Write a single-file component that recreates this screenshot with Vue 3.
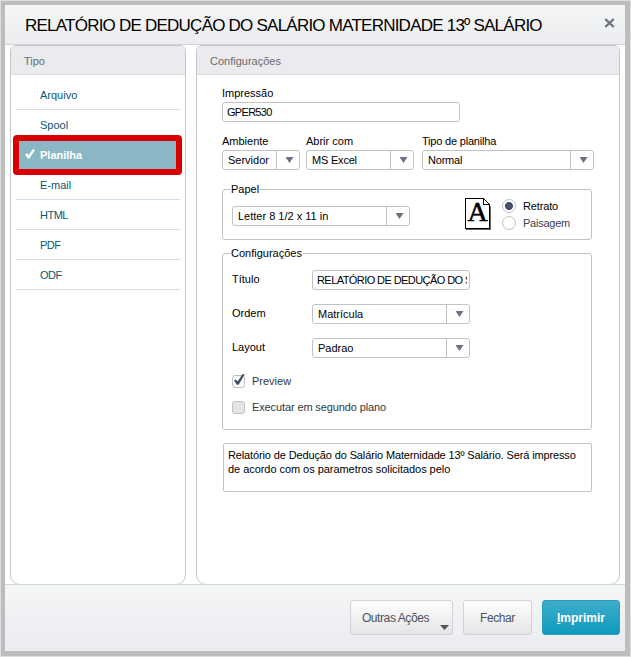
<template>
  <div class="frame">
    <div class="window">
      <header class="title-bar">
        <h1 class="w-title">RELATÓRIO DE DEDUÇÃO DO SALÁRIO MATERNIDADE 13º SALÁRIO</h1>
        <button class="close" aria-label="Close">
          <svg width="11" height="10" viewBox="0 0 11 10">
            <path d="M1.3 1 L9.7 9 M9.7 1 L1.3 9" stroke="#687180" stroke-width="2.3" />
          </svg>
        </button>
      </header>

      <main class="content">
        <section class="panel types">
          <h2 class="panel-head">Tipo</h2>
          <ul class="type-list">
            <li
              v-for="t in types"
              :key="t"
              class="type"
              :class="{ selected: t === type, short: t.length < 5 }"
              @click="type = t"
            >
              <svg v-if="t === type" class="check" width="10" height="10" viewBox="0 0 10 10">
                <path d="M0 5.6 L1.9 4.2 L3.6 6.1 L8 0 L10 1 L4.4 9.4 L2.8 9.4 Z" fill="#fff" />
              </svg>
              <span>{{ t }}</span>
            </li>
          </ul>
        </section>

        <section class="panel settings">
          <h2 class="panel-head">Configurações</h2>
          <div class="form">
            <label class="field">
              <span>Impressão</span>
              <input v-model="impressao" class="input report" />
            </label>

            <div class="row">
              <div v-for="s in selects" :key="s.label" class="field" :class="s.cls">
                <span>{{ s.label }}</span>
                <div class="select">
                  <span class="value">{{ s.value }}</span>
                  <i class="arrow"></i>
                </div>
              </div>
            </div>

            <fieldset class="group paper">
              <legend>Papel</legend>
              <div class="select paper-size">
                <span class="value">Letter 8 1/2 x 11 in</span>
                <i class="arrow"></i>
              </div>
              <svg class="page-icon" width="27" height="33" viewBox="0 0 27 33" shape-rendering="crispEdges">
                <path d="M1 31.5 H25.5 V8" fill="none" stroke="#666" />
                <path d="M0.5 0.5 H18.5 L24.5 6.5 V30.5 H0.5 Z" fill="#fff" stroke="#000" />
                <path d="M18.5 0.5 V6.5 H24.5" fill="none" stroke="#000" />
                <text x="2.6" y="23.4" class="letter">A</text>
              </svg>
              <div class="radios">
                <label class="radio" :class="{ on: orientation === 'Retrato' }" @click="orientation = 'Retrato'">
                  <i class="dot"></i><span>Retrato</span>
                </label>
                <label class="radio" :class="{ on: orientation === 'Paisagem' }" @click="orientation = 'Paisagem'">
                  <i class="dot"></i><span>Paisagem</span>
                </label>
              </div>
            </fieldset>

            <fieldset class="group config">
              <legend>Configurações</legend>
              <div class="line">
                <span class="name">Título</span>
                <input v-model="titulo" class="input" />
              </div>
              <div class="line">
                <span class="name">Ordem</span>
                <div class="select"><span class="value">Matrícula</span><i class="arrow"></i></div>
              </div>
              <div class="line">
                <span class="name">Layout</span>
                <div class="select"><span class="value">Padrao</span><i class="arrow"></i></div>
              </div>
              <div class="option first" @click="preview = !preview">
                <i class="box">
                  <svg v-if="preview" width="13" height="13" viewBox="0 0 13 13">
                    <path d="M2 6.4 L3.8 5.4 L5.6 7.6 L10.4 0.2 L12.8 0.2 L6.6 10.8 L4.8 10.8 Z" fill="#414c63" />
                  </svg>
                </i>
                <span>Preview</span>
              </div>
              <div class="option background">
                <i class="box disabled"></i>
                <span>Executar em segundo plano</span>
              </div>
            </fieldset>

            <div class="description">
              <div class="tight">Relatório de Dedução do Salário Maternidade 13º Salário. Será impresso</div>
              <div>de acordo com os parametros solicitados pelo</div>
            </div>
          </div>
        </section>
      </main>

      <footer class="actions">
        <button class="btn other">Outras Ações<i class="caret"></i></button>
        <button class="btn cancel">Fechar</button>
        <button class="btn primary"><span><u>I</u>mprimir</span></button>
      </footer>
    </div>
  </div>
</template>

<script setup>
import { ref } from 'vue'

const types = ['Arquivo', 'Spool', 'Planilha', 'E-mail', 'HTML', 'PDF', 'ODF']
const type = ref('Planilha')

const selects = [
  { label: 'Ambiente', value: 'Servidor', cls: 'ambiente' },
  { label: 'Abrir com', value: 'MS Excel', cls: 'abrir' },
  { label: 'Tipo de planilha', value: 'Normal', cls: 'planilha' },
]

const impressao = ref('GPER530')
const titulo = ref('RELATÓRIO DE DEDUÇÃO DO SALÁRIO MATERNIDADE 13º SALÁRIO')
const orientation = ref('Retrato')
const preview = ref(true)
</script>

<style>
body {
  margin: 0;
  background: #e4e4e4;
}
</style>

<style scoped>
* {
  box-sizing: border-box;
}

.frame {
  width: 631px;
  height: 657px;
  padding: 1px;
  background: #dedede;
  font: 11px/14px 'Liberation Sans', Arial, sans-serif;
  color: #000;
}

input,
button {
  font: inherit;
}

.window {
  display: flex;
  flex-direction: column;
  height: 655px;
  border: solid #bdbdbd;
  border-width: 4px 5px 5px 4px;
  background: #fff;
}

.title-bar {
  display: flex;
  justify-content: space-between;
  height: 40px;
  flex: none;
  padding: 0 10px 0 20px;
  border-bottom: 1px solid #d2d5d6;
  background: linear-gradient(#f4f6f5, #ededf1);
}

.w-title {
  margin: 0;
  font-size: 17px;
  font-weight: normal;
  letter-spacing: -0.77px;
  line-height: 42px;
  white-space: nowrap;
}

.close {
  display: flex;
  align-self: flex-start;
  margin-top: 13px;
  padding: 0;
  border: 0;
  background: none;
}

.content {
  display: flex;
  gap: 10px;
  height: 539px;
  flex: none;
  padding: 0 5px;
  overflow: hidden;
}

.panel {
  height: 540px;
  border: 1px solid #c3c5c6;
  border-radius: 6px 6px 10px 10px;
  overflow: hidden;
}

.types {
  width: 176px;
}

.settings {
  width: 424px;
}

.panel-head {
  height: 29px;
  margin: 0;
  padding-left: 13px;
  border-bottom: 1px solid #dcdde1;
  background: #eaeaef;
  color: #6a6a6e;
  font-size: 11px;
  font-weight: normal;
  line-height: 30px;
}

.type-list {
  margin: 0;
  padding: 5px 5px 0;
  list-style: none;
}

.type {
  display: flex;
  align-items: center;
  height: 30px;
  padding-left: 24px;
  border-bottom: 1px solid #d3e0ea;
  color: #0b566e;
}

.type.short {
  letter-spacing: -0.5px;
}

.type.selected {
  position: relative;
  margin-right: 3px;
  margin-left: 2px;
  padding-left: 7px;
  border-bottom: 0;
  background: #8ab7c4;
  color: #fff;
  font-weight: bold;
}

/* red highlight around the chosen type */
.type.selected::after {
  content: '';
  position: absolute;
  inset: -5px;
  border: 6px solid #d90000;
  border-radius: 4px;
}

.check {
  margin: -2px 5px 0 0;
}

.form {
  padding: 11px 0 0 25px;
}

.field {
  display: flex;
  flex-direction: column;
  gap: 2px;
  white-space: nowrap;
}

.input {
  height: 20px;
  padding: 0 2px 0 4px;
  border: 1px solid #c0c3c6;
  border-radius: 3px;
  background: #fff;
  color: #000;
  letter-spacing: -0.57px;
}

.report {
  width: 238px;
  letter-spacing: -0.7px;
}

.row {
  display: flex;
  margin-top: 12px;
}

.ambiente {
  width: 78px;
}

.abrir {
  width: 108px;
  margin-left: 6px;
}

.abrir .value {
  letter-spacing: -0.2px;
}

.planilha {
  width: 172px;
  margin-left: 8px;
  letter-spacing: -0.2px;
}

.select {
  display: flex;
  height: 20px;
  border: 1px solid #c0c3c6;
  border-radius: 3px;
  background: #fff;
}

.value {
  flex: 1;
  padding-left: 5px;
  line-height: 19px;
  white-space: nowrap;
}

.arrow {
  display: flex;
  align-items: center;
  justify-content: center;
  width: 23px;
  flex: none;
  border-left: 1px solid #c0c3c6;
}

.arrow::after {
  content: '';
  width: 8px;
  height: 6px;
  margin-left: 3px;
  background: #6b7283;
  clip-path: polygon(0 0, 100% 0, 50% 100%);
}

.group {
  width: 370px;
  min-width: 0;
  margin: 0;
  border: 1px solid #c0c3c6;
  border-radius: 3px;
}

.group legend {
  margin-left: -2px;
  padding: 0 1px;
}

.paper {
  display: flex;
  align-items: flex-start;
  height: 58px;
  margin-top: 12px;
  padding: 0 0 0 9px;
}

.paper-size {
  width: 178px;
  margin-top: 10px;
}

.page-icon {
  margin: 2px 0 0 55px;
}

.letter {
  font: 28px 'Liberation Serif', 'Times New Roman', serif;
  stroke: #000;
  stroke-width: 0.6px;
}

.radios {
  display: flex;
  flex-direction: column;
  gap: 3px;
  margin: 3px 0 0 10px;
}

.radio {
  display: flex;
  align-items: center;
  gap: 7px;
  height: 14px;
  color: #3d4350;
  letter-spacing: -0.25px;
}

.radio.on {
  color: #000;
  letter-spacing: -0.15px;
}

.dot {
  width: 14px;
  height: 14px;
  border: 1px solid #bfc2c5;
  border-radius: 50%;
  background: #fff;
}

.radio.on .dot {
  background: radial-gradient(circle, #465269 3.6px, #fff 4.4px);
}

.config {
  height: 184px;
  margin-top: 6px;
  padding: 10px 0 0 9px;
}

.line {
  display: flex;
  margin-bottom: 14px;
}

.name {
  width: 80px;
  line-height: 19px;
}

.line .input,
.line .select {
  width: 158px;
}

.option {
  display: flex;
  align-items: center;
  gap: 7px;
  height: 14px;
  margin-top: 12px;
  color: #33363d;
}

.option.first {
  margin-top: 16px;
}

.option.background {
  letter-spacing: -0.12px;
}

.box {
  display: flex;
  width: 13px;
  height: 13px;
  border: 1px solid #bfc2c5;
  border-radius: 3px;
  background: #fff;
}

.box svg {
  flex: none;
  margin: -2px 0 0 -1px;
}

.box.disabled {
  background: #e4e4e4;
}

.description {
  width: 369px;
  height: 49px;
  margin: 13px 0 0 1px;
  padding: 4px;
  border: 1px solid #c0c3c6;
  border-radius: 2px;
  letter-spacing: -0.05px;
  white-space: nowrap;
}

.tight {
  letter-spacing: -0.13px;
}

.actions {
  display: flex;
  flex: 1;
  justify-content: flex-end;
  gap: 10px;
  padding: 15px 5px 0;
  border-top: 1px solid #d2d5d6;
  background: linear-gradient(#f5f7f6, #f1f3f3 35%, #f0f1f4 45%, #ebecef);
}

.btn {
  height: 35px;
  padding: 0;
  border: 1px solid #d2d3d5;
  border-radius: 3px;
  background: linear-gradient(#fdfdfd, #e5e5e5);
  color: #4c5260;
  font-size: 12px;
  letter-spacing: -0.4px;
}

.other {
  position: relative;
  width: 103px;
  padding-right: 12px;
}

.caret {
  position: absolute;
  right: 3px;
  bottom: 4px;
  width: 9px;
  height: 5px;
  background: #50545e;
  clip-path: polygon(0 0, 100% 0, 50% 100%);
}

.cancel {
  width: 69px;
}

.primary {
  width: 78px;
  border-color: #2a9dbb;
  background: linear-gradient(#3dadcc, #109abd);
  color: #fff;
  font-weight: bold;
  letter-spacing: 0;
}
</style>
